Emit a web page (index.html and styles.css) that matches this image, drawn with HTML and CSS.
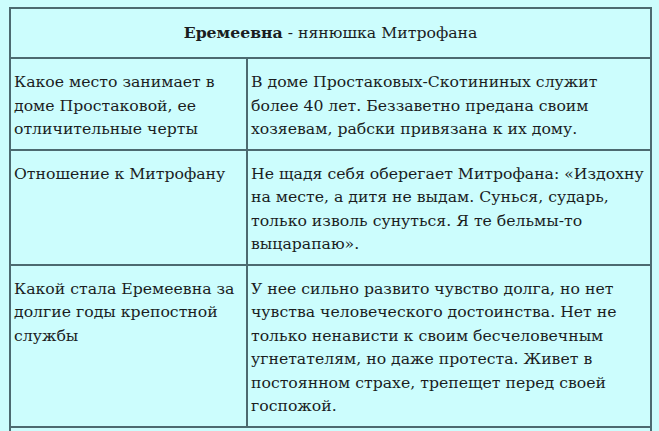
FILE: index.html
```html
<!DOCTYPE html>
<html lang="ru">
<head>
<meta charset="utf-8">
<title>Еремеевна</title>
<link rel="stylesheet" href="styles.css">
</head>
<body>
<table class="grid">
  <colgroup><col class="c1"><col class="c2"></colgroup>
  <tr class="head"><td colspan="2"><b>Еремеевна</b> - нянюшка Митрофана</td></tr>
  <tr class="r1">
    <td>Какое место занимает в<br>доме Простаковой, ее<br>отличительные черты</td>
    <td>В доме Простаковых-Скотининых служит<br>более 40 лет. Беззаветно предана своим<br>хозяевам, рабски привязана к их дому.</td>
  </tr>
  <tr class="r2">
    <td>Отношение к Митрофану</td>
    <td>Не щадя себя оберегает Митрофана: «Издохну<br>на месте, а дитя не выдам. Сунься, сударь,<br>только изволь сунуться. Я те бельмы-то<br>выцарапаю».</td>
  </tr>
  <tr class="r3">
    <td>Какой стала Еремеевна за<br>долгие годы крепостной<br>службы</td>
    <td>У нее сильно развито чувство долга, но нет<br>чувства человеческого достоинства. Нет не<br>только ненависти к своим бесчеловечным<br>угнетателям, но даже протеста. Живет в<br>постоянном страхе, трепещет перед своей<br>госпожой.</td>
  </tr>
  <tr class="r4"><td colspan="2"></td></tr>
</table>
</body>
</html>
```
FILE: styles.css
```css
html, body {
  margin: 0;
  padding: 0;
  background: #ccfdfd;
  overflow: hidden;
  height: 431px;
}
.grid {
  margin: 7px 0 0 9px;
  width: 641px;
  border-collapse: collapse;
  table-layout: fixed;
  font-family: "DejaVu Serif", Georgia, serif;
  font-size: 15.7px;
  line-height: 23.5px;
  color: #1b1d1f;
  background: #ccfdfd;
}
.c1 { width: 237px; }
.c2 { width: 404px; }
.grid td {
  border: 2px solid #4c6a70;
  vertical-align: top;
  padding: 11px 2px 8px 3px;
  white-space: nowrap;
}
.head td {
  height: 48px;
  padding: 0 0 0 0;
  vertical-align: middle;
  text-align: center;
}
.r1 td { height: 70px; }
.r2 td { height: 94px; }
.r3 td { height: 133px; }
.r4 td { height: 40px; }
```
